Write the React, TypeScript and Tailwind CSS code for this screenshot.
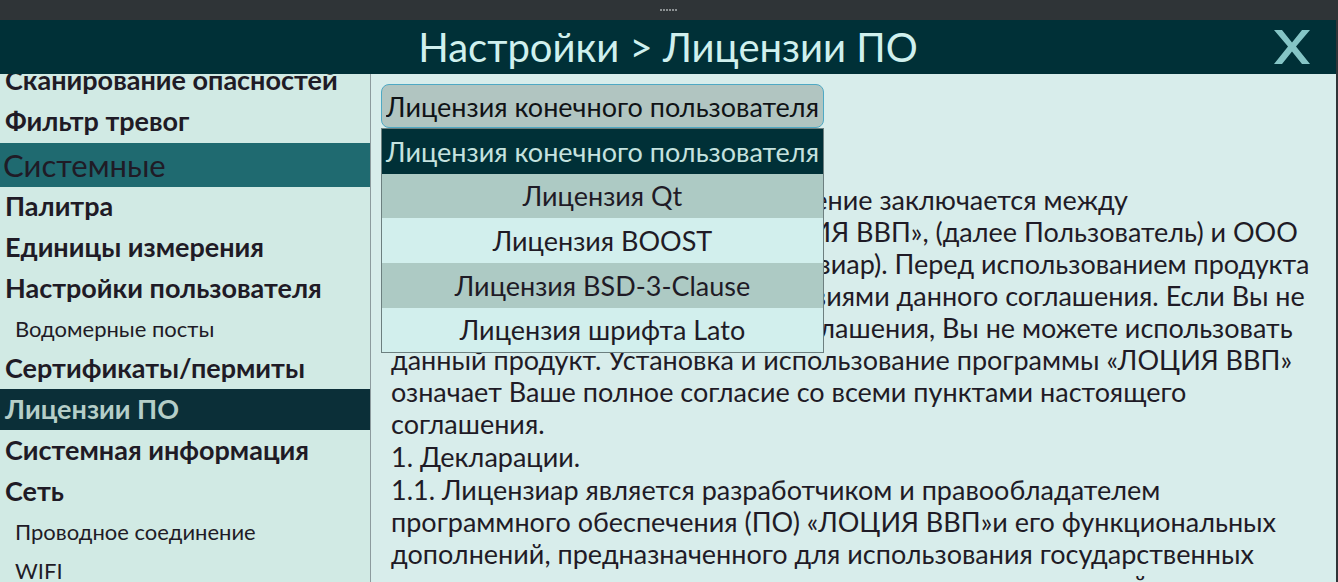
const licenses = [
  { name: 'Лицензия конечного пользователя', row: 'bg-[#003037] leading-[45px] text-[#c5e2df]' },
  { name: 'Лицензия Qt', row: 'bg-[#adcac4] leading-[44px]' },
  { name: 'Лицензия BOOST', row: 'bg-[#d2efed] leading-[45px]' },
  { name: 'Лицензия BSD-3-Clause', row: 'bg-[#adcac4] leading-[45px]' },
  { name: 'Лицензия шрифта Lato', row: 'bg-[#d2efed] leading-[44px]' },
];

type Entry = { label: string; kind: 'item' | 'group' | 'sub'; active?: boolean };

const menu: Entry[] = [
  { label: 'Сканирование опасностей', kind: 'item' },
  { label: 'Фильтр тревог', kind: 'item' },
  { label: 'Системные', kind: 'group' },
  { label: 'Палитра', kind: 'item' },
  { label: 'Единицы измерения', kind: 'item' },
  { label: 'Настройки пользователя', kind: 'item' },
  { label: 'Водомерные посты', kind: 'sub' },
  { label: 'Сертификаты/пермиты', kind: 'item' },
  { label: 'Лицензии ПО', kind: 'item', active: true },
  { label: 'Системная информация', kind: 'item' },
  { label: 'Сеть', kind: 'item' },
  { label: 'Проводное соединение', kind: 'sub' },
  { label: 'WIFI', kind: 'sub' },
];

const kindClass = {
  item: 'h-[41px] pl-[5px] text-[27px] font-bold',
  group: 'mt-px -mb-px h-11 pl-[3px] text-[31px] bg-[#1f6a70]',
  sub: 'h-[39px] pl-[15px] text-[22px]',
};

const agreement = [
  'Настоящее лицензионное соглашение заключается между',
  'пользователем программы «ЛОЦИЯ ВВП», (далее Пользователь) и ООО',
  '«Моринтех Сервис», (далее Лицензиар). Перед использованием продукта',
  'внимательно ознакомьтесь с условиями данного соглашения. Если Вы не',
  'согласны с условиями данного соглашения, Вы не можете использовать',
  'данный продукт. Установка и использование программы «ЛОЦИЯ ВВП»',
  'означает Ваше полное согласие со всеми пунктами настоящего',
  'соглашения.',
];

const heading = ['1. Декларации.'];

const declarations = [
  '1.1. Лицензиар является разработчиком и правообладателем',
  'программного обеспечения (ПО) «ЛОЦИЯ ВВП»и его функциональных',
  'дополнений, предназначенного для использования государственных',
  'электронных навигационных карт внутренних водных путей',
];

function Lines({ lines }: { lines: string[] }) {
  return (
    <p>
      {lines.map((line) => (
        <span key={line} className="block whitespace-nowrap">{line}</span>
      ))}
    </p>
  );
}

export default function App() {
  return (
    <div className="flex h-screen flex-col overflow-hidden bg-[#2f3437] pr-[2px] font-['Lato',sans-serif] text-[#1f1b26]">
      <div className="flex h-5 shrink-0 items-center justify-center gap-px">
        {[0, 1, 2, 3, 4, 5].map((dot) => (
          <span key={dot} className="size-[2px] bg-[#8b9092]" />
        ))}
      </div>
      <header className="grid h-[54px] shrink-0 grid-cols-[1fr_auto_1fr] items-center bg-[#003037]">
        <h1 className="col-start-2 text-[40px] leading-[54px] text-[#d0f0ee]">Настройки &gt; Лицензии ПО</h1>
        <button type="button" aria-label="Закрыть" className="mr-[25px] justify-self-end">
          <svg width="38" height="36" viewBox="0 0 38 36" fill="#85c5c6">
            <path d="M1 1H9L19 13.5L29 1H37L23 17.5L37 35H29L19 22.5L9 35H1L15 17.5Z" />
          </svg>
        </button>
      </header>
      <div className="flex min-h-0 flex-1">
        <nav className="w-[371px] shrink-0 overflow-hidden border-r border-[#8d9b9e] bg-[#d1eae4]">
          <ul className="-mt-[14px]">
            {menu.map(({ label, kind, active }) => (
              <li key={label} className="flow-root">
                <a
                  href="#"
                  className={`flex items-center whitespace-nowrap ${kindClass[kind]} ${active ? 'bg-[#0b2f38] text-[#b5cec8]' : ''}`}
                >
                  {label}
                </a>
              </li>
            ))}
          </ul>
        </nav>
        <main className="min-w-0 flex-1 overflow-hidden bg-[#d8edeb] px-[10px] pt-[10px]">
          <div className="relative w-fit">
            <select
              aria-label="Лицензия"
              className="block h-11 appearance-none rounded-lg border border-[#4fa9c4] bg-[#b1c5c1] px-1 pt-0.5 text-center text-[27px] text-[#101316]"
            >
              {licenses.map(({ name }) => (
                <option key={name}>{name}</option>
              ))}
            </select>
            <ul role="listbox" aria-label="Список лицензий" className="absolute inset-x-0 top-full border border-[#6c7f7f] text-center text-[27px]">
              {licenses.map(({ name, row }, i) => (
                <li key={name} role="option" aria-selected={i === 0} className={row}>
                  {name}
                </li>
              ))}
            </ul>
          </div>
          <article className="mt-14 space-y-px pl-[10px] text-[27px] leading-[32px]">
            <Lines lines={agreement} />
            <Lines lines={heading} />
            <Lines lines={declarations} />
          </article>
        </main>
      </div>
    </div>
  );
}
